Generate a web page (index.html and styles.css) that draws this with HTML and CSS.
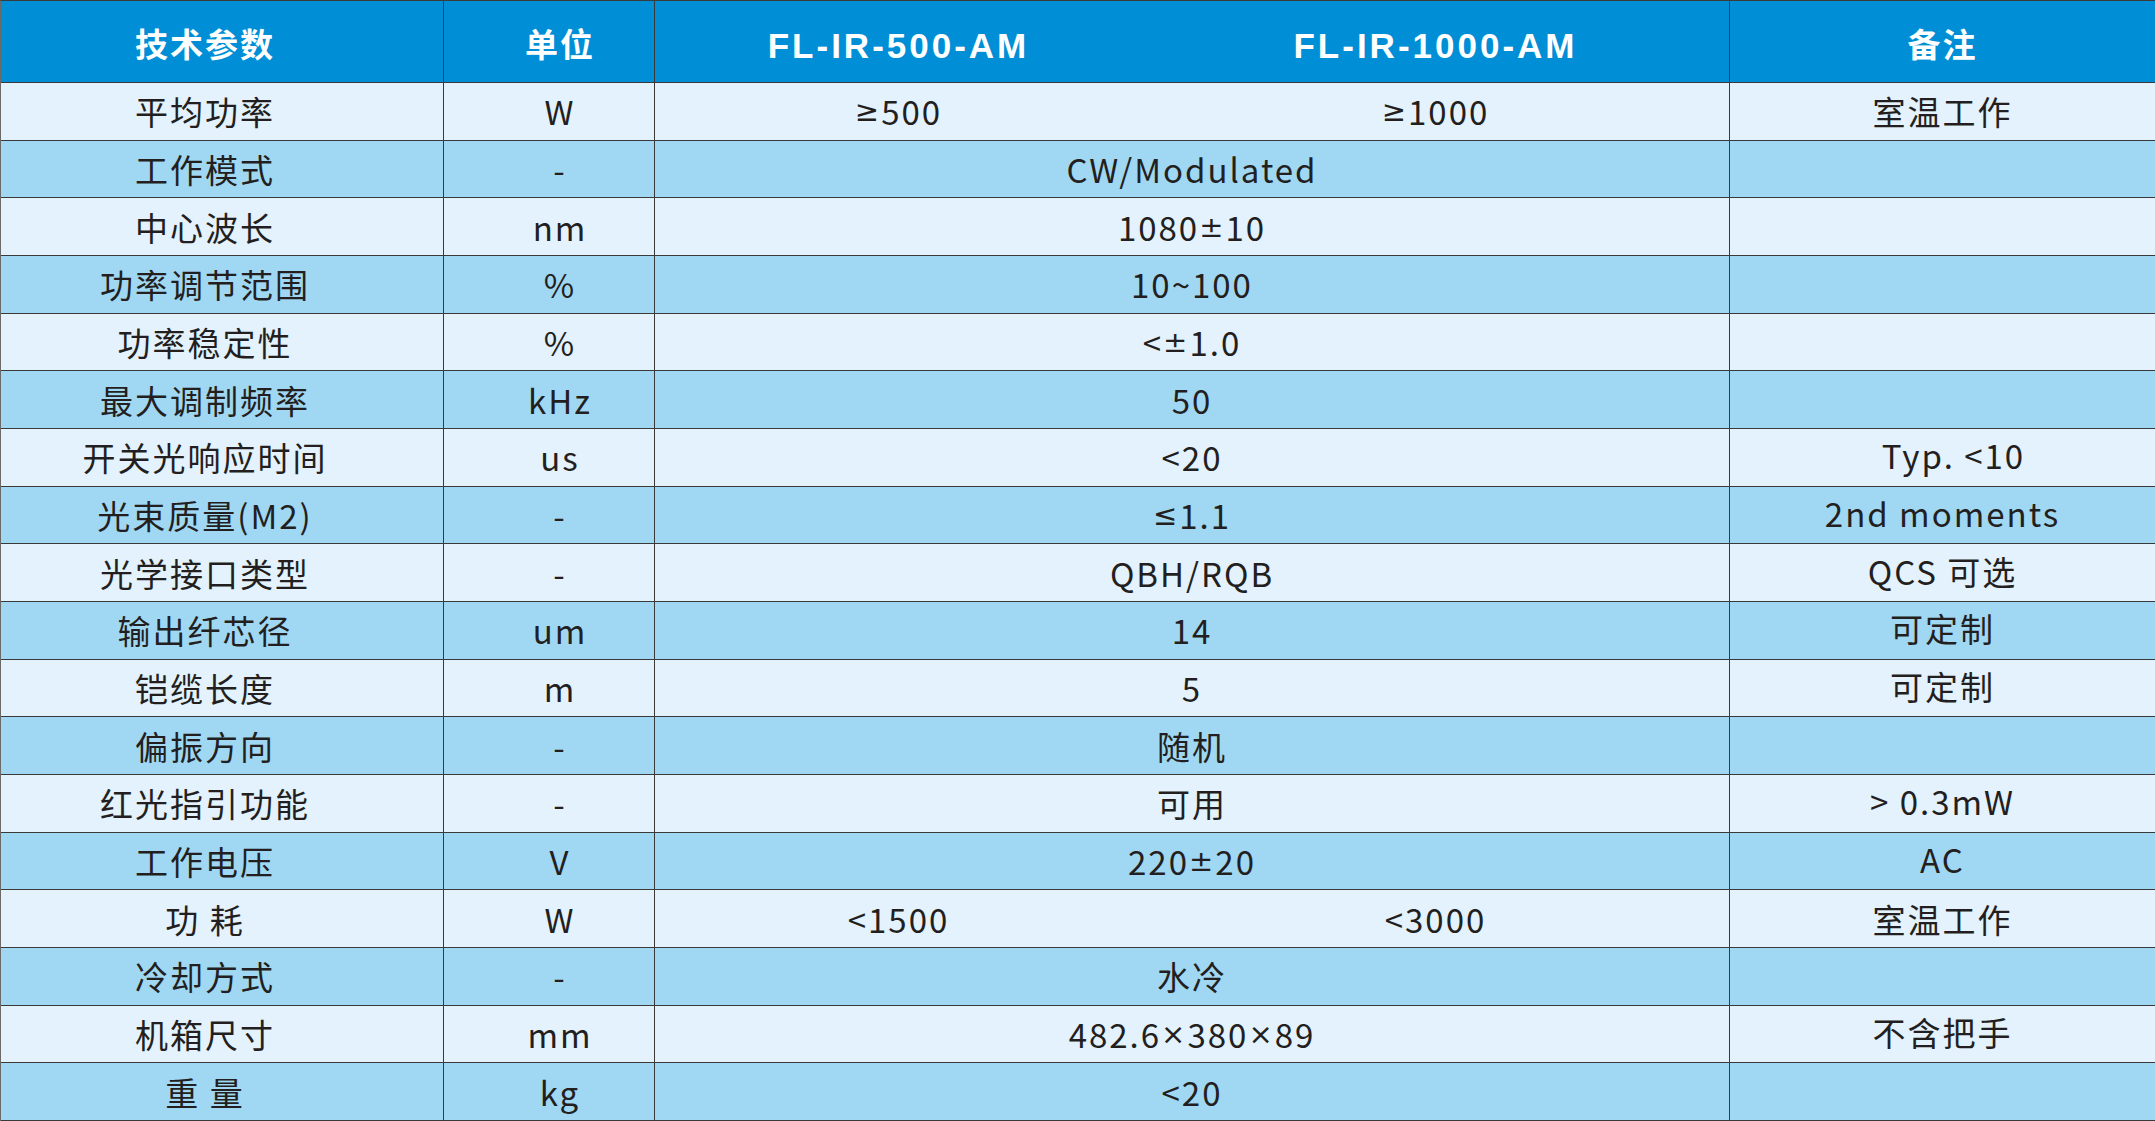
FILE: index.html
```html
<!DOCTYPE html>
<html lang="zh-CN">
<head>
<meta charset="utf-8">
<title>FL-IR-AM 技术参数</title>
<link rel="stylesheet" href="styles.css">
</head>
<body>
<div class="spec">
  <div class="c hd name">技术参数</div>
  <div class="c hd unit">单位</div>
  <div class="c hd model nb">FL-IR-500-AM</div>
  <div class="c hd model">FL-IR-1000-AM</div>
  <div class="c hd last">备注</div>

  <div class="c lt name">平均功率</div><div class="c lt unit">W</div><div class="c lt nb"><span class="sym">≥</span>500</div><div class="c lt"><span class="sym">≥</span>1000</div><div class="c lt last">室温工作</div>
  <div class="c dk name">工作模式</div><div class="c dk unit">-</div><div class="c dk span">CW/Modulated</div><div class="c dk last"></div>
  <div class="c lt name">中心波长</div><div class="c lt unit">nm</div><div class="c lt span">1080<span class="sym">±</span>10</div><div class="c lt last"></div>
  <div class="c dk name">功率调节范围</div><div class="c dk unit">%</div><div class="c dk span">10~100</div><div class="c dk last"></div>
  <div class="c lt name">功率稳定性</div><div class="c lt unit">%</div><div class="c lt span">&lt;<span class="sym">±</span>1.0</div><div class="c lt last"></div>
  <div class="c dk name">最大调制频率</div><div class="c dk unit">kHz</div><div class="c dk span">50</div><div class="c dk last"></div>
  <div class="c lt name">开关光响应时间</div><div class="c lt unit">us</div><div class="c lt span">&lt;20</div><div class="c lt last note typ">Typ. &lt;10</div>
  <div class="c dk name">光束质量(M2)</div><div class="c dk unit">-</div><div class="c dk span"><span class="sym">≤</span>1.1</div><div class="c dk last note">2nd moments</div>
  <div class="c lt name">光学接口类型</div><div class="c lt unit">-</div><div class="c lt span">QBH/RQB</div><div class="c lt last note">QCS 可选</div>
  <div class="c dk name">输出纤芯径</div><div class="c dk unit">um</div><div class="c dk span">14</div><div class="c dk last note">可定制</div>
  <div class="c lt name">铠缆长度</div><div class="c lt unit">m</div><div class="c lt span">5</div><div class="c lt last note">可定制</div>
  <div class="c dk name">偏振方向</div><div class="c dk unit">-</div><div class="c dk span">随机</div><div class="c dk last"></div>
  <div class="c lt name">红光指引功能</div><div class="c lt unit">-</div><div class="c lt span">可用</div><div class="c lt last note">&gt; 0.3mW</div>
  <div class="c dk name">工作电压</div><div class="c dk unit">V</div><div class="c dk span">220<span class="sym">±</span>20</div><div class="c dk last note">AC</div>
  <div class="c lt name">功 耗</div><div class="c lt unit">W</div><div class="c lt nb">&lt;1500</div><div class="c lt">&lt;3000</div><div class="c lt last">室温工作</div>
  <div class="c dk name">冷却方式</div><div class="c dk unit">-</div><div class="c dk span">水冷</div><div class="c dk last"></div>
  <div class="c lt name">机箱尺寸</div><div class="c lt unit">mm</div><div class="c lt span">482.6<span class="sym">×</span>380<span class="sym">×</span>89</div><div class="c lt last note">不含把手</div>
  <div class="c dk name">重 量</div><div class="c dk unit">kg</div><div class="c dk span">&lt;20</div><div class="c dk last"></div>
</div>
</body>
</html>
```

FILE: styles.css
```css
html, body {
  margin: 0;
  padding: 0;
  background: #ffffff;
}

.spec {
  display: grid;
  grid-template-columns: 443px 211px 487px 588px 1fr;
  grid-template-rows: 82px repeat(18, 1fr);
  width: 2155px;
  height: 1121px;
  box-sizing: border-box;
  border-top: 1.5px solid #3a3a3a;
  border-left: 1.5px solid #6a6a6a;
  font-family: "Noto Sans CJK SC", "Noto Sans", sans-serif;
  color: #231f20;
  font-size: 33px;
  letter-spacing: 2px;
}

.c {
  display: flex;
  align-items: center;
  justify-content: center;
  border-right: 1.5px solid #3a3a3a;
  border-bottom: 1.5px solid #3a3a3a;
  box-sizing: border-box;
  min-width: 0;
  white-space: pre;
}

.last { border-right: none; }
.nb { border-right: none; }
.span { grid-column: span 2; }

.name { padding-right: 34px; }
.unit { padding-left: 22px; }

.sym {
  font-family: "DejaVu Sans", sans-serif;
  font-size: 29px;
  letter-spacing: 2px;
}

.hd {
  background: #008fd6;
  color: #ffffff;
  font-weight: 700;
  font-size: 33px;
  letter-spacing: 2px;
  padding-top: 2px;
}

.model {
  font-family: "Liberation Sans", Arial, sans-serif;
  font-size: 35px;
  letter-spacing: 3px;
  padding-top: 8px;
}

.lt { background: #e3f2fc; }
.dk { background: #a0d8f4; }

.note { padding-bottom: 4px; }
.typ { padding-left: 22px; }
```
